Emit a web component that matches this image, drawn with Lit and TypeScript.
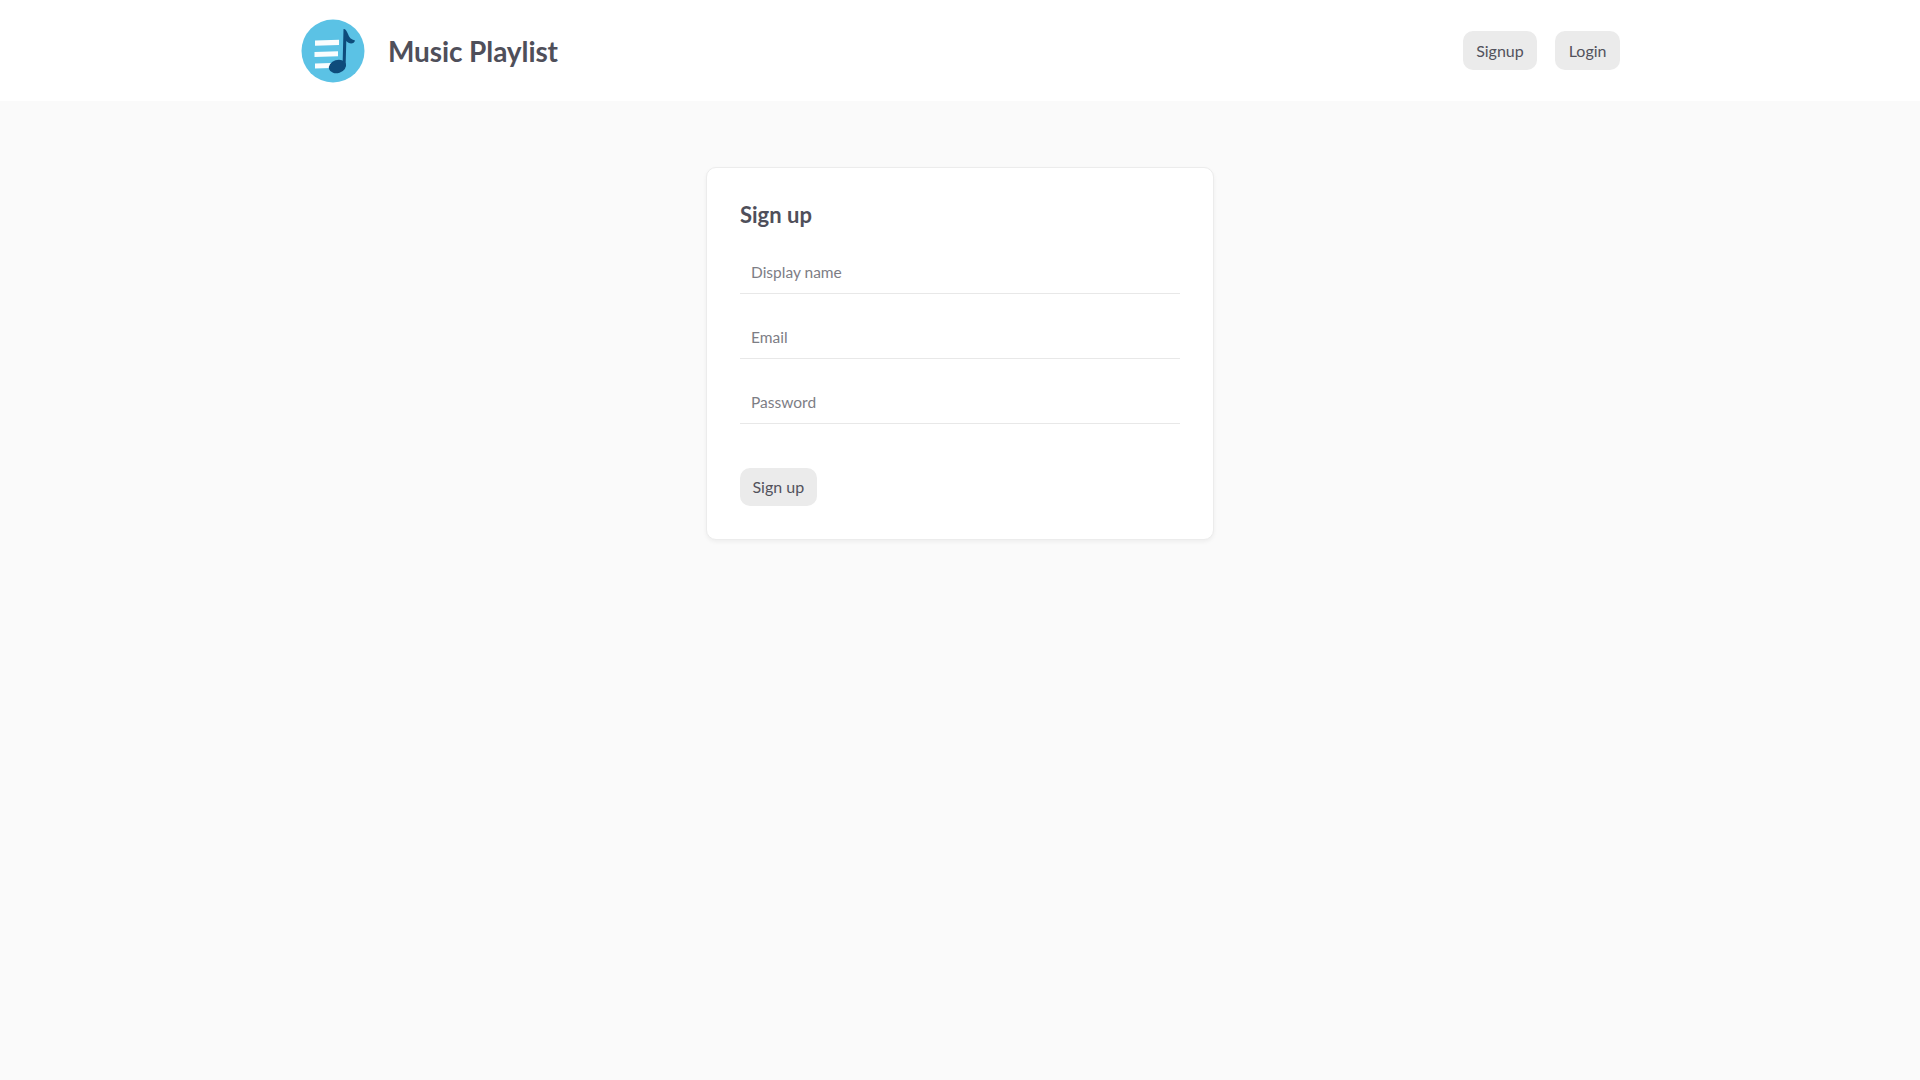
import { LitElement, html, css } from "lit";
import { customElement } from "lit/decorators.js";

@customElement("app-root")
export class AppRoot extends LitElement {
  static styles = css`
    :host {
      display: block;
      min-height: 1080px;
      background: #fafafa;
      font-family: "Lato", "Noto Sans", sans-serif;
      color: #4a4a4a;
    }
    .header {
      height: 101px;
      background: #fff;
      display: flex;
      justify-content: center;
    }
    .bar {
      width: 1320px;
      display: flex;
      align-items: center;
      justify-content: space-between;
    }
    .brand {
      display: flex;
      align-items: center;
      gap: 23px;
      padding-left: 1px;
    }
    .logo {
      width: 64px;
      height: 64px;
      display: block;
    }
    .title {
      font-size: 28px;
      font-weight: 700;
      color: #4f4f5a;
      line-height: 36px;
      letter-spacing: -0.1px;
    }
    .nav {
      display: flex;
      gap: 18px;
    }
    .btn {
      border: none;
      background: #ebebeb;
      color: #52525c;
      font: 400 16px/24px "Lato", "Noto Sans", sans-serif;
      padding: 0 13.5px;
      height: 39px;
      border-radius: 10px;
    }
    .main {
      display: flex;
      justify-content: center;
      padding-top: 66px;
    }
    .card {
      box-sizing: border-box;
      width: 508px;
      height: 373px;
      background: #fff;
      border-radius: 10px;
      border: 1px solid #ececec;
      box-shadow: 0 2px 4px rgba(0, 0, 0, 0.05);
      padding: 32px 33px;
      display: flex;
      flex-direction: column;
    }
    .card h2 {
      margin: 0 0 15px;
      font-size: 22px;
      line-height: 30px;
      font-weight: 700;
      color: #4f4f5a;
    }
    .fields {
      display: flex;
      flex-direction: column;
      gap: 16px;
    }
    input {
      box-sizing: border-box;
      width: 100%;
      height: 49px;
      border: none;
      border-bottom: 1px solid #e8e8e8;
      padding: 6px 11px 0;
      font: 400 15.5px "Lato", "Noto Sans", sans-serif;
      outline: none;
      background: #fff;
    }
    input::placeholder {
      color: #7d7d85;
      opacity: 1;
    }
    .submit {
      margin-top: 44px;
      align-self: flex-start;
      height: 38px;
      padding: 0 12.5px;
    }
  `;

  render() {
    return html`
      <header class="header">
        <div class="bar">
          <div class="brand">
            <svg class="logo" viewBox="0 0 64 64" aria-hidden="true">
              <circle cx="32" cy="32" r="31.5" fill="#5bc2e5" />
              <path d="M14 21.5 L38 20.8 V26 L14 26.7 Z M13.5 33 L37 32.3 V37.2 L13.5 37.9 Z M14 44.5 L30 44 V49 L14 49.5 Z" fill="#fafdfe" />
              <ellipse cx="36.5" cy="47.5" rx="8.8" ry="6.6" transform="rotate(-18 36.5 47.5)" fill="#0e4c7b" />
              <path d="M41.5 49 L42.5 10 C45 10 45.5 12 47 15 C48 18.5 50 20.5 54 21.5 C53.5 24.5 50 25 47.5 23.8 C46.5 23.3 46 22.8 45.3 22 L44.6 47 Z" fill="#0e4c7b" />
            </svg>
            <span class="title">Music Playlist</span>
          </div>
          <nav class="nav">
            <button class="btn">Signup</button>
            <button class="btn">Login</button>
          </nav>
        </div>
      </header>
      <main class="main">
        <section class="card">
          <h2>Sign up</h2>
          <div class="fields">
            <input type="text" placeholder="Display name" />
            <input type="email" placeholder="Email" />
            <input type="password" placeholder="Password" />
          </div>
          <button class="btn submit">Sign up</button>
        </section>
      </main>
    `;
  }
}
